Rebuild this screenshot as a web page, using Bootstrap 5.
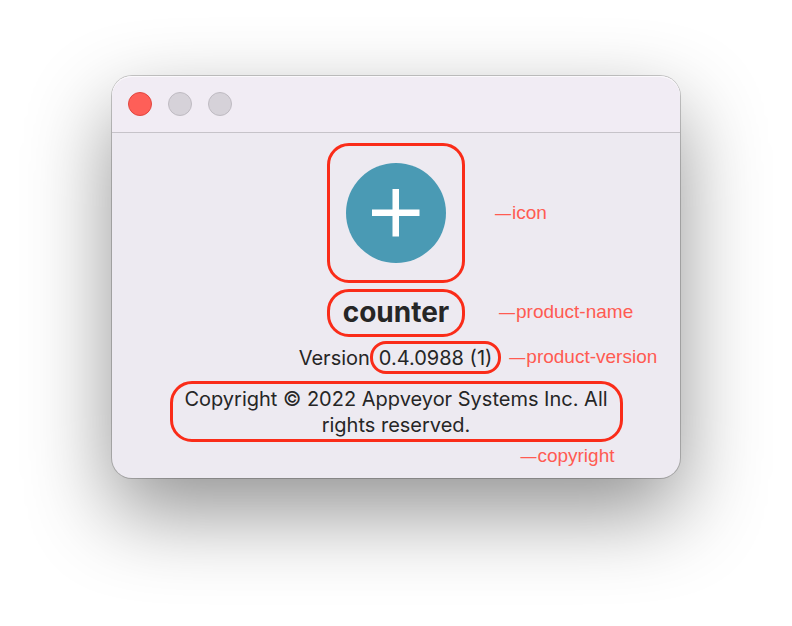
<!DOCTYPE html>
<html lang="en">
<head>
<meta charset="utf-8">
<meta name="viewport" content="width=device-width, initial-scale=1">
<title>About counter</title>
<link href="https://cdn.jsdelivr.net/npm/bootstrap@5.3.0/dist/css/bootstrap.min.css" rel="stylesheet">
<style>
body { font-family: Inter, "Liberation Sans", sans-serif; font-size: 20px; line-height: 26px; color: #262626; background: #fff; }
.stage { padding: 76px 112px; }
.about-window { border-radius: 20px; background: #edeaf1; box-shadow: 0 0 0 1px rgba(0,0,0,.2), 0 34px 84px rgba(0,0,0,.43); }
.title-bar { height: 57px; padding: 0 16px; background: #f1ecf4; border-bottom: 1px solid #c6c3c9; border-radius: 20px 20px 0 0; box-shadow: inset 0 1px 0 #fbf9fc; }
.light { width: 24px; height: 24px; border: 1px solid #bfbbc2; background: #d6d2d9; }
.light-close { background: #fe5f58; border-color: #e2463f; }
.about-body { padding: 10px 0; }
.about-row { display: grid; grid-template-columns: 1fr auto 1fr; align-items: center; }
.outlined { border: 3px solid #fa2c19; }
.icon-frame { width: 138px; height: 140px; border-radius: 22px; }
.name-frame { width: 138px; height: 48px; border-radius: 22px; font-size: 28px; font-weight: 700; margin: 6px 0 4px; }
.version-frame { height: 33px; padding: 0 6px; border-radius: 16px; white-space: nowrap; }
.copyright-block { width: 100%; max-width: 453px; margin-top: 7px; }
.copyright-frame { border-radius: 22px; padding: 2px 6px 1px; }
.flag { font-family: "Liberation Sans", Arial, sans-serif; font-size: 19px; line-height: 22px; color: #ff5b52; white-space: nowrap; }
.flag-dash { font-size: 16px; margin-right: 1px; }
.flag-icon { margin-left: 30px; }
.flag-name { margin-left: 34px; }
.flag-version { margin-left: 8px; }
.flag-copyright { margin-top: 3px; }
</style>
<script src="https://cdn.jsdelivr.net/npm/bootstrap@5.3.0/dist/js/bootstrap.bundle.min.js"></script>
</head>
<body>
<main class="stage min-vh-100">
  <section class="about-window" aria-label="About counter">
    <header class="title-bar d-flex align-items-center gap-3">
      <button type="button" class="light light-close rounded-circle p-0" aria-label="Close"></button>
      <button type="button" class="light rounded-circle p-0" aria-label="Minimize" disabled></button>
      <button type="button" class="light rounded-circle p-0" aria-label="Zoom" disabled></button>
    </header>
    <div class="about-body">
      <div class="about-row">
        <div></div>
        <div class="icon-frame outlined d-flex align-items-center justify-content-center">
          <svg width="100" height="100" viewBox="0 0 100 100" aria-hidden="true">
            <circle cx="50" cy="50" r="50" fill="#4a9ab4"/>
            <path d="M26 46.500H46.500V26H53V46.500H73.500V53H53V73.500H46.500V53H26Z" fill="#fff"/>
          </svg>
        </div>
        <div class="flag flag-icon"><span class="flag-dash">—</span>icon</div>
      </div>
      <div class="about-row">
        <div></div>
        <h1 class="name-frame outlined d-flex align-items-center justify-content-center">counter</h1>
        <div class="flag flag-name"><span class="flag-dash">—</span>product-name</div>
      </div>
      <div class="about-row">
        <div></div>
        <div class="d-flex align-items-center ps-2">Version<span class="version-frame outlined d-flex align-items-center">0.4.0988 (1)</span></div>
        <div class="flag flag-version"><span class="flag-dash">—</span>product-version</div>
      </div>
      <div class="copyright-block mx-auto">
        <div class="copyright-frame outlined text-center">Copyright © 2022 Appveyor Systems Inc. All rights reserved.</div>
        <div class="flag flag-copyright text-end pe-2"><span class="flag-dash">—</span>copyright</div>
      </div>
    </div>
  </section>
</main>
</body>
</html>
